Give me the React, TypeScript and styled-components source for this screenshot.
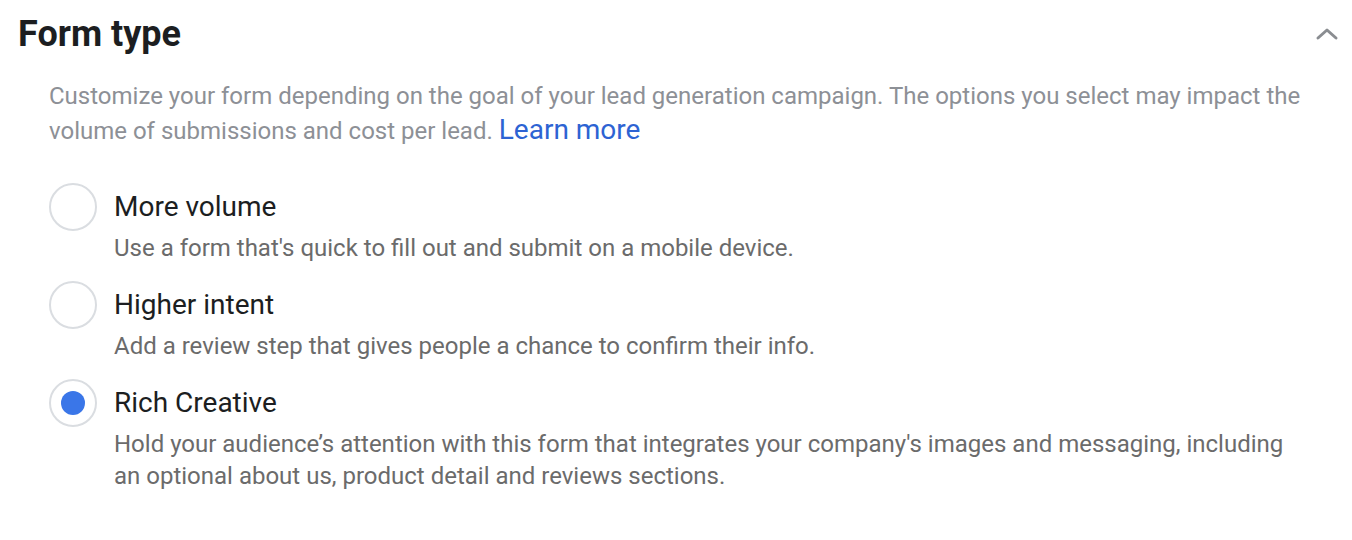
import React from 'react'
import styled, { createGlobalStyle } from 'styled-components'

const GlobalStyle = createGlobalStyle`
  html, body {
    margin: 0;
    padding: 0;
    background: #ffffff;
  }
  body {
    font-family: Roboto, "Liberation Sans", Arial, sans-serif;
    -webkit-font-smoothing: antialiased;
  }
`

const Panel = styled.section`
  box-sizing: border-box;
  width: 1352px;
  padding: 12px 11px 0 18px;
`

const Header = styled.div`
  display: flex;
  align-items: center;
  justify-content: space-between;
`

const Title = styled.h2`
  margin: 0;
  font-size: 36px;
  line-height: 44px;
  font-weight: 700;
  color: #1c1e21;
`

const Toggle = styled.button`
  display: flex;
  align-items: center;
  justify-content: center;
  width: 28px;
  height: 28px;
  padding: 0;
  border: none;
  background: none;
  cursor: pointer;
`

const Intro = styled.p`
  margin: 23px 34px 0 31px;
  font-size: 24px;
  line-height: 34px;
  color: #8d9096;
`

const Link = styled.a`
  font-size: 28px;
  color: #2d63d3;
  text-decoration: none;
`

const Options = styled.div`
  display: flex;
  flex-direction: column;
  gap: 17px;
  margin: 35px 0 0 31px;
`

const Option = styled.label`
  display: flex;
  align-items: flex-start;
  gap: 17px;
  cursor: pointer;
`

const Radio = styled.span<{ $checked?: boolean }>`
  box-sizing: border-box;
  flex: none;
  display: flex;
  align-items: center;
  justify-content: center;
  width: 48px;
  height: 48px;
  border-radius: 50%;
  border: 2px solid #dadde1;
  background: #ffffff;

  &::after {
    content: '';
    display: ${(p) => (p.$checked ? 'block' : 'none')};
    width: 24px;
    height: 24px;
    border-radius: 50%;
    background: #3a76e8;
  }
`

const Text = styled.div`
  display: flex;
  flex-direction: column;
  padding-right: 44px;
`

const Label = styled.span`
  font-size: 28px;
  line-height: 48px;
  color: #1c1e21;
`

const Desc = styled.span`
  font-size: 24px;
  line-height: 32px;
  margin-top: 1px;
  color: #6b6b6b;
`

const options = [
  {
    label: 'More volume',
    desc: "Use a form that's quick to fill out and submit on a mobile device.",
    checked: false,
  },
  {
    label: 'Higher intent',
    desc: 'Add a review step that gives people a chance to confirm their info.',
    checked: false,
  },
  {
    label: 'Rich Creative',
    desc: "Hold your audience\u2019s attention with this form that integrates your company's images and messaging, including an optional about us, product detail and reviews sections.",
    checked: true,
  },
]

export default function App() {
  return (
    <>
      <GlobalStyle />
      <Panel>
        <Header>
          <Title>Form type</Title>
          <Toggle aria-label="Collapse">
            <svg width="24" height="24" viewBox="0 0 24 24" fill="none">
              <polyline
                points="3,16 12,8 21,16"
                stroke="#8a8d91"
                strokeWidth="3"
                strokeLinecap="round"
                strokeLinejoin="round"
              />
            </svg>
          </Toggle>
        </Header>
        <Intro>
          Customize your form depending on the goal of your lead generation campaign. The options you
          select may impact the volume of submissions and cost per lead. <Link href="#">Learn more</Link>
        </Intro>
        <Options>
          {options.map((o) => (
            <Option key={o.label}>
              <Radio $checked={o.checked} />
              <Text>
                <Label>{o.label}</Label>
                <Desc>{o.desc}</Desc>
              </Text>
            </Option>
          ))}
        </Options>
      </Panel>
    </>
  )
}
